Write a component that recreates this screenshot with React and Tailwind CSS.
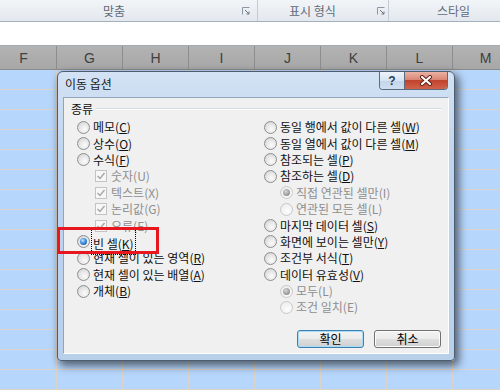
import React from 'react';

const COLS = ['F', 'G', 'H', 'I', 'J', 'K', 'L', 'M'];
const ROWS = Array.from({ length: 16 }, (_, i) => i);

function Launcher() {
  return (
    <svg width="8" height="8" viewBox="0 0 8 8" className="shrink-0">
      <path d="M0.5 7.5V0.5H7.5" fill="none" stroke="#8d97a3" strokeWidth="1" />
      <path d="M3 3L7 7M7 4.5V7H4.5" fill="none" stroke="#6b7683" strokeWidth="1" />
    </svg>
  );
}

function Radio({ checked, disabled }) {
  return (
    <span
      className={`relative w-[13px] h-[13px] rounded-full border shrink-0 ${
        disabled
          ? 'border-[#c9c9c9] bg-[radial-gradient(circle_at_60%_65%,#fdfdfd_0%,#f1f1f1_60%,#e6e6e6_100%)]'
          : 'border-[#8e8f8f] bg-[radial-gradient(circle_at_60%_65%,#fbfbfb_0%,#e4e4e4_55%,#c9c9c9_100%)]'
      }`}
    >
      {checked && (
        <span
          className={`absolute inset-[2px] rounded-full ${
            disabled
              ? 'bg-[radial-gradient(circle_at_40%_35%,#d6d6d6,#9c9c9c_60%,#7e7e7e)]'
              : 'bg-[radial-gradient(circle_at_40%_35%,#c4e8ff,#3f8ee0_45%,#0f3f8a)]'
          }`}
        />
      )}
    </span>
  );
}

function Check() {
  return (
    <span className="flex items-center justify-center w-[12px] h-[12px] border border-[#c3c3c3] bg-[#f7f7f7] shrink-0">
      <svg width="10" height="10" viewBox="0 0 10 10">
        <path d="M1.5 5L4 7.5L8.5 2" fill="none" stroke="#a9a9a9" strokeWidth="1.5" />
      </svg>
    </span>
  );
}

function Label({ text, k, disabled }) {
  return (
    <span className={`text-[12px] leading-[14px] whitespace-nowrap ${disabled ? 'text-[#8e8e8e]' : 'text-[#111]'}`}>
      {text}(
      {disabled ? k : <span className="underline underline-offset-[1px]">{k}</span>})
    </span>
  );
}

function Row({ kind = 'radio', text, k, checked, disabled, indent, focus }) {
  return (
    <div className={`h-[16.4px] flex items-center ${indent ? 'pl-[16px]' : ''}`}>
      {kind === 'check' ? (
        <div className="flex items-center pl-[18px] gap-[4px]">
          <Check />
          <Label text={text} k={k} disabled />
        </div>
      ) : (
        <div className="flex items-center gap-[3px]">
          <Radio checked={checked} disabled={disabled} />
          {focus ? (
            <span className="outline outline-1 outline-dotted outline-black px-[1px] -ml-[1px]">
              <Label text={text} k={k} />
            </span>
          ) : (
            <Label text={text} k={k} disabled={disabled} />
          )}
        </div>
      )}
    </div>
  );
}

function WinButton({ children, primary }) {
  return (
    <div
      className={`w-[67px] h-[18px] rounded-[3px] border flex items-center justify-center text-[12px] leading-[14px] text-black bg-[linear-gradient(#f3f3f3,#ebebeb_50%,#dedede_50%,#d0d0d0)] ${
        primary
          ? 'border-[#3c7fb1] shadow-[inset_0_0_0_1px_#a8dcf6]'
          : 'border-[#707070] shadow-[inset_0_0_0_1px_#fcfcfc]'
      }`}
    >
      {children}
    </div>
  );
}

export default function App() {
  return (
    <div className="relative w-[500px] h-[390px] overflow-hidden bg-[#b7d6fb] font-['Noto_Sans_CJK_KR',sans-serif]">
      {/* ribbon group labels */}
      <div className="h-[22px] flex bg-[linear-gradient(#f2f5f8,#e3e8ee)] border-b border-[#a4afbc] text-[12px] leading-[14px] text-[#5f6b7b]">
        <div className="w-[258px] flex items-center border-r border-[#c3cbd5]">
          <span className="ml-[103px]">맞춤</span>
          <span className="ml-auto mr-[7px] flex"><Launcher /></span>
        </div>
        <div className="w-[131px] flex items-center border-r border-[#c3cbd5]">
          <span className="ml-[31px]">표시 형식</span>
          <span className="ml-auto mr-[3px] flex"><Launcher /></span>
        </div>
        <div className="flex-1 flex items-center">
          <span className="ml-[48px]">스타일</span>
        </div>
      </div>

      {/* formula bar strip */}
      <div className="h-[24px] bg-white border-b border-[#a3abb5]" />

      {/* column headers */}
      <div className="h-[24px] flex ml-[-9px] bg-[linear-gradient(#b3b3b3,#a7a7a7)] border-b border-[#8c8c8c]">
        {COLS.map((c) => (
          <div
            key={c}
            className="w-[66px] shrink-0 border-r border-[#8d8d8d] flex items-center justify-center pt-[2px] text-[14px] text-[#404040] font-['Liberation_Sans',sans-serif]"
          >
            {c}
          </div>
        ))}
      </div>

      {/* grid */}
      <div className="ml-[-9px]">
        {ROWS.map((r) => (
          <div key={r} className="h-[20px] flex">
            {COLS.map((c) => (
              <div key={c} className="w-[66px] shrink-0 border-r border-b border-[#ddd4c9]" />
            ))}
          </div>
        ))}
      </div>

      {/* dialog */}
      <div className="absolute left-[57px] top-[71px] w-[398px] h-[290px] rounded-t-[6px] rounded-b-[4px] border border-[#4e5d70] bg-[linear-gradient(#d3e2f4,#bfd4ee_30%,#b9d0eb)] shadow-[3px_4px_8px_1px_rgba(0,0,0,0.55)] flex flex-col">
        <div className="h-[25px] flex items-start">
          <span className="ml-[7px] mt-[4px] text-[12px] leading-[16px] text-[#1b1b1b]">이동 옵션</span>
          <div className="ml-auto mr-[6px] flex rounded-b-[4px] border border-t-0 border-[#5b6b80] overflow-hidden">
            <div className="w-[25px] h-[17px] flex items-center justify-center border-r border-[#5b6b80] bg-[linear-gradient(#eef3f9,#d6e3f2_50%,#c3d5ea_50%,#d0def0)]">
              <span className="text-[12px] leading-[12px] font-bold text-[#2a3d55] font-['Liberation_Sans',sans-serif]">?</span>
            </div>
            <div className="w-[42px] h-[17px] flex items-center justify-center bg-[linear-gradient(#eab2a4,#d98673_45%,#c0432d_50%,#d0634b)]">
              <svg width="14" height="11" viewBox="0 0 14 11">
                <path d="M3 2L11 9M11 2L3 9" stroke="#5a1d14" strokeWidth="4" strokeLinecap="round" />
                <path d="M3 2L11 9M11 2L3 9" stroke="#ffffff" strokeWidth="2.2" strokeLinecap="round" />
              </svg>
            </div>
          </div>
        </div>

        <div className="mx-[5px] h-[257px] bg-[#f0f0f0] border border-t-[#8fa4be] border-l-[#8fa4be] border-r-white border-b-white">
          <div className="h-[21px] flex items-center pl-[7px]">
            <span className="text-[12px] leading-[14px] text-[#111]">종류</span>
            <div className="flex-1 ml-[3px] mr-[6px] border-t border-[#d3dde4] border-b border-b-white" />
          </div>

          <div className="grid grid-cols-[187px_1fr]">
            <div className="pl-[13px]">
              <Row text="메모" k="C" />
              <Row text="상수" k="O" />
              <Row text="수식" k="F" />
              <Row kind="check" text="숫자" k="U" />
              <Row kind="check" text="텍스트" k="X" />
              <Row kind="check" text="논리값" k="G" />
              <Row kind="check" text="오류" k="E" />
              <Row text="빈 셀" k="K" checked focus />
              <Row text="현재 셀이 있는 영역" k="R" />
              <Row text="현재 셀이 있는 배열" k="A" />
              <Row text="개체" k="B" />
            </div>
            <div className="pl-[13px]">
              <Row text="동일 행에서 값이 다른 셀" k="W" />
              <Row text="동일 열에서 값이 다른 셀" k="M" />
              <Row text="참조되는 셀" k="P" />
              <Row text="참조하는 셀" k="D" />
              <Row text="직접 연관된 셀만" k="I" indent disabled checked />
              <Row text="연관된 모든 셀" k="L" indent disabled />
              <Row text="마지막 데이터 셀" k="S" />
              <Row text="화면에 보이는 셀만" k="Y" />
              <Row text="조건부 서식" k="T" />
              <Row text="데이터 유효성" k="V" />
              <Row text="모두" k="L" indent disabled checked />
              <Row text="조건 일치" k="E" indent disabled />
            </div>
          </div>

          <div className="mt-[14px] flex justify-end gap-[10px] mr-[7px]">
            <WinButton primary>확인</WinButton>
            <WinButton>취소</WinButton>
          </div>
        </div>
      </div>

      {/* annotation */}
      <div className="absolute left-[57px] top-[227px] w-[102px] h-[27px] border-[3px] border-[#e8161f]" />
    </div>
  );
}
